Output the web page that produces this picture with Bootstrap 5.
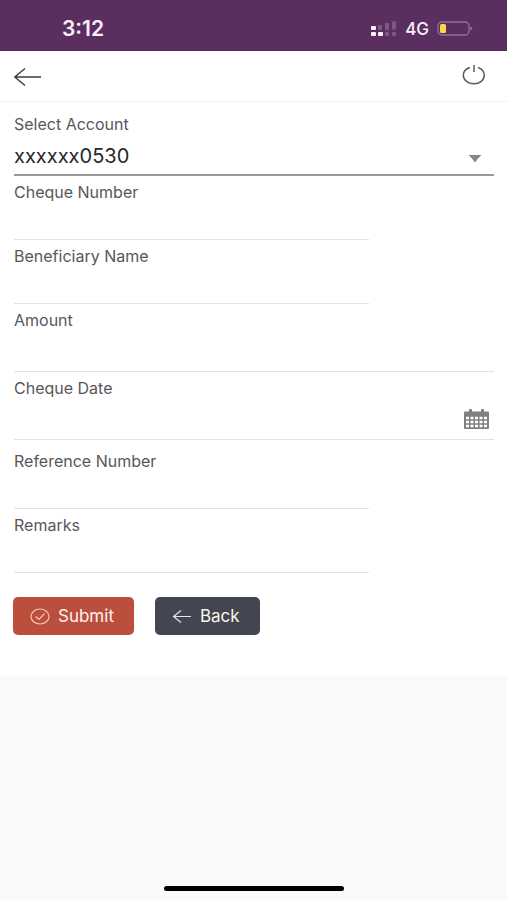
<!DOCTYPE html>
<html lang="en">
<head>
<meta charset="utf-8">
<meta name="viewport" content="width=device-width, initial-scale=1">
<title>Cheque details</title>
<link href="https://cdn.jsdelivr.net/npm/bootstrap@5.3.0/dist/css/bootstrap.min.css" rel="stylesheet">
<style>
  body { font-family: Inter, Roboto, sans-serif; background: #fafafa; color: #26282c; }
  svg { display: block; flex: none; }
  .status-bar { background: #5a2f5f; height: 51px; padding: 6px 34px 0 62px; color: #fbeffc; }
  .status-time { font-size: 21px; font-weight: 600; line-height: 24px; }
  .status-net { font-size: 17px; font-weight: 500; line-height: 24px; }
  .top-bar { height: 51px; padding: 0 21px 0 13px; border-bottom: 1px solid #f1f1f1; }
  .icon-btn { border: 0; background: none; padding: 0; }
  .panel { padding: 6px 13px 41px 14px; }
  .field { padding-top: 6px; }
  .field label { display: block; font-size: 16px; line-height: 20px; color: #56575a; }
  .field .form-control, .field .form-select {
    height: 38px; padding: 0; border: 0; border-bottom: 1px solid #e2e2e2; border-radius: 0;
    background-color: transparent; font-size: 20px; color: #26282c; box-shadow: none;
  }
  .field.narrow { width: 74%; }
  .field.tall .form-control { height: 42px; }
  .field.spaced { margin-bottom: 5px; }
  .field .form-select {
    height: 42px; padding-top: 4px; border-bottom: 2px solid #999; line-height: 36px;
    background-image: linear-gradient(to bottom right, #888 50%, transparent 54%), linear-gradient(to bottom left, #888 50%, transparent 54%);
    background-size: 6px 7px; background-position: right 13px top 21px, right 19px top 21px;
  }
  .field .icon-btn { width: 31px; height: 42px; padding: 2px 2px 0 0; border-bottom: 1px solid #e2e2e2; }
  .field .icon-btn svg { margin-left: auto; margin-right: 3px; }
  .actions { gap: 21px; margin-top: 24px; margin-left: -1px; }
  .actions .btn { height: 38px; border: 0; border-radius: 5px; padding: 0 20px 0 17px; gap: 8px; font-size: 17px; line-height: 24px; color: #fff3ef; }
  .btn-send { background: #bb4e3c; }
  .btn-return { background: #434650; }
  .btn-send:hover { background: #a94434; }
  .btn-return:hover { background: #363942; }
  .home-bar { width: 180px; height: 5px; border-radius: 3px; background: #000; margin-bottom: 9px; }
</style>
</head>
<body>
<div class="d-flex flex-column min-vh-100">
  <div class="status-bar d-flex align-items-center justify-content-between">
    <span class="status-time">3:12</span>
    <div class="d-flex align-items-center gap-2">
      <svg width="26" height="16" viewBox="0 0 26 16" fill="#fbeffc" aria-hidden="true">
        <rect x="0" y="5" width="5" height="4" rx="1"/><rect x="0" y="11" width="5" height="4" rx="1"/><rect x="7" y="11" width="5" height="4" rx="1"/>
        <g opacity=".22"><rect x="7" y="4" width="4" height="5" rx="1"/><rect x="14" y="2" width="4" height="7" rx="1"/><rect x="21" y="0" width="4" height="9" rx="2"/><rect x="14" y="11" width="4" height="4" rx="1"/><rect x="21" y="11" width="4" height="4" rx="1"/></g>
      </svg>
      <span class="status-net">4G</span>
      <svg width="36" height="16" viewBox="0 0 36 16" aria-hidden="true">
        <rect x="1" y="1" width="31" height="13" rx="4" fill="none" stroke="#94709a" stroke-width="1.3"/>
        <rect x="3" y="3" width="6" height="9" rx="1.5" fill="#fbd847"/>
        <path d="M33.5 5.500q3 2 0 4z" fill="#a783aa"/>
      </svg>
    </div>
  </div>

  <main class="bg-white">
    <header class="top-bar d-flex align-items-center justify-content-between">
      <button type="button" class="icon-btn" aria-label="Go back">
        <svg width="30" height="20" viewBox="0 0 30 20" fill="none" stroke="#3d3d3d" stroke-width="1.4"><path d="M28 11H2M12 2.500 1.800 11 12 19.500"/></svg>
      </button>
      <button type="button" class="icon-btn" aria-label="Log out">
        <svg width="24" height="26" viewBox="0 0 24 26" fill="none" stroke="#5c5c5c" stroke-width="1.5"><path d="M8 4.500C4 5.700 1.300 8.600 1.300 12.300c0 4.800 4.800 8.400 10.700 8.400s10.200-3.600 10.200-8.400c0-3.700-2.700-6.600-6.200-7.800M12 2v7"/></svg>
      </button>
    </header>

    <form class="panel">
      <div class="field">
        <label for="account">Select Account</label>
        <select class="form-select" id="account"><option>xxxxxx0530</option></select>
      </div>
      <div class="field narrow">
        <label for="cheque-number">Cheque Number</label>
        <input class="form-control" id="cheque-number" type="text">
      </div>
      <div class="field narrow">
        <label for="beneficiary">Beneficiary Name</label>
        <input class="form-control" id="beneficiary" type="text">
      </div>
      <div class="field tall">
        <label for="amount">Amount</label>
        <input class="form-control" id="amount" type="text" inputmode="decimal">
      </div>
      <div class="field tall spaced">
        <label for="cheque-date">Cheque Date</label>
        <div class="d-flex">
          <input class="form-control" id="cheque-date" type="text">
          <button type="button" class="icon-btn" aria-label="Pick a date">
            <svg width="25" height="21" viewBox="0 0 25 21" aria-hidden="true">
              <path fill="#808080" d="M1 2.500h4V1q0-1 1-1h1q1 0 1 1v1.500h9V1q0-1 1-1h1q1 0 1 1v1.500h4q1 0 1 1V19q0 1-1 1H1q-1 0-1-1V3.500q0-1 1-1z"/>
              <path fill="none" stroke="#fff" stroke-width="2.600" stroke-dasharray="3 1.500" d="M2 9h21M2 13h21M2 17h21"/>
            </svg>
          </button>
        </div>
      </div>
      <div class="field narrow">
        <label for="reference">Reference Number</label>
        <input class="form-control" id="reference" type="text">
      </div>
      <div class="field narrow">
        <label for="remarks">Remarks</label>
        <input class="form-control" id="remarks" type="text">
      </div>
      <div class="actions d-flex">
        <button type="submit" class="btn btn-send d-flex align-items-center">
          <svg width="20" height="18" viewBox="0 0 20 18" fill="none" stroke="#f6c8a8" stroke-width="1.2" aria-hidden="true"><ellipse cx="10" cy="9.500" rx="9" ry="7.500"/><path d="M5.500 9.500 9 12.500 14.500 6.500"/></svg>
          Submit
        </button>
        <button type="button" class="btn btn-return d-flex align-items-center">
          <svg width="20" height="18" viewBox="0 0 20 18" fill="none" stroke="#e4e4e8" stroke-width="1.2" aria-hidden="true"><path d="M19 9.500H1.500M9 3.500 1.500 9.500 9 15.500"/></svg>
          Back
        </button>
      </div>
    </form>
  </main>

  <div class="home-bar mt-auto mx-auto"></div>
</div>
<script src="https://cdn.jsdelivr.net/npm/bootstrap@5.3.0/dist/js/bootstrap.bundle.min.js"></script>
</body>
</html>
